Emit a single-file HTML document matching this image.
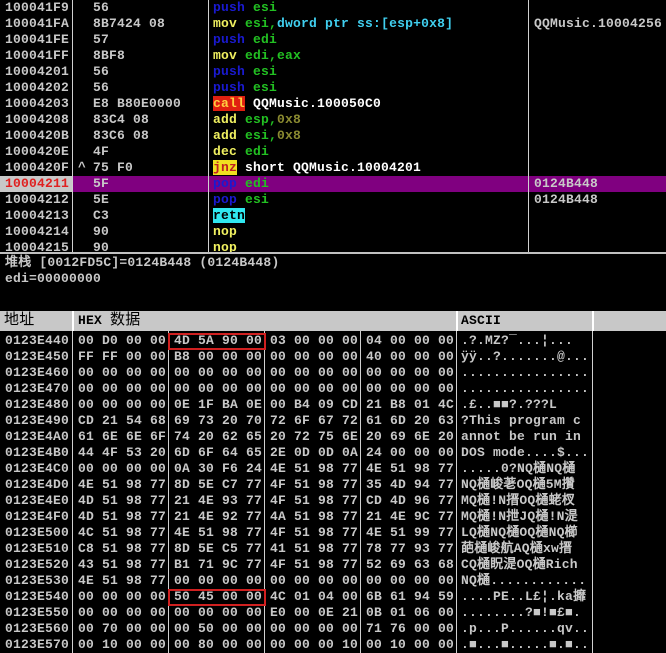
<!DOCTYPE html>
<html><head><meta charset="utf-8"><style>
*{margin:0;padding:0;box-sizing:border-box}
body{width:666px;height:653px;background:#000;overflow:hidden;position:relative;font:bold 13px "Liberation Mono","WenQuanYi Zen Hei",monospace;letter-spacing:.2px;color:#c8c8c8}
.r{position:absolute;left:0;width:666px;height:16px;line-height:16px;white-space:pre}
.r span{position:absolute;top:0}
.a{left:5px}
.b{left:93px}
.c{left:78px}
.d{left:213px}
.m{left:534px}
.vl{position:absolute;width:1px;background:#d0d0d0}
.P{color:#1a1ad0}.G{color:#22c022}.Y{color:#f0f060}.C{color:#40d0f0}.O{color:#8a8a30}.W{color:#fff}
.hx{left:78px}
.as{left:461px}
</style></head><body>
<!-- disasm -->
<div class="r" style="top:-16px"><span class="d" style="background:#f0f000;color:#f0f000">jnz </span></div>
<div class="r" style="top:0"><span class="a">100041F9</span><span class="b">56</span><span class="d"><i class="P" style="font-style:normal">push</i> <i class="G" style="font-style:normal">esi</i></span></div>
<div class="r" style="top:16px"><span class="a">100041FA</span><span class="b">8B7424 08</span><span class="d"><b class="Y">mov</b> <b class="G">esi,</b><b class="C">dword ptr ss:[esp+0x8]</b></span><span class="m">QQMusic.10004256</span></div>
<div class="r" style="top:32px"><span class="a">100041FE</span><span class="b">57</span><span class="d"><b class="P">push</b> <b class="G">edi</b></span></div>
<div class="r" style="top:48px"><span class="a">100041FF</span><span class="b">8BF8</span><span class="d"><b class="Y">mov</b> <b class="G">edi,eax</b></span></div>
<div class="r" style="top:64px"><span class="a">10004201</span><span class="b">56</span><span class="d"><b class="P">push</b> <b class="G">esi</b></span></div>
<div class="r" style="top:80px"><span class="a">10004202</span><span class="b">56</span><span class="d"><b class="P">push</b> <b class="G">esi</b></span></div>
<div class="r" style="top:96px"><span class="a">10004203</span><span class="b">E8 B80E0000</span><span class="d"><b style="background:#e02010;color:#ffd040">call</b> <b class="W">QQMusic.100050C0</b></span></div>
<div class="r" style="top:112px"><span class="a">10004208</span><span class="b">83C4 08</span><span class="d"><b class="Y">add</b> <b class="G">esp,</b><b class="O">0x8</b></span></div>
<div class="r" style="top:128px"><span class="a">1000420B</span><span class="b">83C6 08</span><span class="d"><b class="Y">add</b> <b class="G">esi,</b><b class="O">0x8</b></span></div>
<div class="r" style="top:144px"><span class="a">1000420E</span><span class="b">4F</span><span class="d"><b class="Y">dec</b> <b class="G">edi</b></span></div>
<div class="r" style="top:160px"><span class="a">1000420F</span><span class="c">^</span><span class="b">75 F0</span><span class="d"><b style="background:#f0e020;color:#c02020">jnz</b> <b class="W">short QQMusic.10004201</b></span></div>
<div class="r" style="top:176px;background:#800080"><span style="left:0;width:72px;height:16px;background:#c8c8c8"></span><span class="a" style="color:#e02020">10004211</span><span class="b">5F</span><span class="d"><b class="P">pop</b> <b class="G">edi</b></span><span class="m">0124B448</span></div>
<div class="r" style="top:192px"><span class="a">10004212</span><span class="b">5E</span><span class="d"><b class="P">pop</b> <b class="G">esi</b></span><span class="m">0124B448</span></div>
<div class="r" style="top:208px"><span class="a">10004213</span><span class="b">C3</span><span class="d"><b style="background:#30e8f0;color:#000">retn</b></span></div>
<div class="r" style="top:224px"><span class="a">10004214</span><span class="b">90</span><span class="d"><b class="Y">nop</b></span></div>
<div class="r" style="top:240px;height:12px;overflow:hidden"><span class="a">10004215</span><span class="b">90</span><span class="d"><b class="Y">nop</b></span></div>
<div class="vl" style="left:72px;top:0;height:252px"></div>
<div class="vl" style="left:208px;top:0;height:252px"></div>
<div class="vl" style="left:528px;top:0;height:252px"></div>
<div style="position:absolute;left:0;top:252px;width:666px;height:2px;background:#c0c0c0"></div>
<!-- info -->
<div class="r" style="top:255px"><span style="left:5px">堆栈 [0012FD5C]=0124B448 (0124B448)</span></div>
<div class="r" style="top:271px"><span style="left:5px">edi=00000000</span></div>
<!-- header -->
<div style="position:absolute;left:0;top:311px;width:666px;height:20px;background:#c8c8c8;color:#000;font-size:13px;line-height:20px">
<span style="position:absolute;left:4px;font-weight:normal;font-size:15px">地址</span>
<span style="position:absolute;left:78px">HEX <span style="font-weight:normal;font-size:15px">数据</span></span>
<span style="position:absolute;left:461px">ASCII</span>
<div style="position:absolute;left:72px;top:0;width:2px;height:20px;background:#fff"></div>
<div style="position:absolute;left:456px;top:0;width:2px;height:20px;background:#fff"></div>
<div style="position:absolute;left:592px;top:0;width:2px;height:20px;background:#fff"></div>
</div>
<div id="hex"></div>
<div class="vl" style="left:72px;top:331px;height:322px"></div>
<div class="vl" style="left:168px;top:331px;height:322px"></div>
<div class="vl" style="left:264px;top:331px;height:322px"></div>
<div class="vl" style="left:360px;top:331px;height:322px"></div>
<div class="vl" style="left:456px;top:331px;height:322px"></div>
<div class="vl" style="left:592px;top:331px;height:322px"></div>
<div style="position:absolute;left:168px;top:333px;width:98px;height:17px;border:2px solid #d02020"></div>
<div style="position:absolute;left:168px;top:589px;width:98px;height:17px;border:2px solid #d02020"></div>
<div class="r" style="top:333px"><span class="a">0123E440</span><span class="hx">00 D0 00 00 4D 5A 90 00 03 00 00 00 04 00 00 00</span><span class="as">.?.MZ?‾...¦...</span></div>
<div class="r" style="top:349px"><span class="a">0123E450</span><span class="hx">FF FF 00 00 B8 00 00 00 00 00 00 00 40 00 00 00</span><span class="as">ÿÿ..?.......@...</span></div>
<div class="r" style="top:365px"><span class="a">0123E460</span><span class="hx">00 00 00 00 00 00 00 00 00 00 00 00 00 00 00 00</span><span class="as">................</span></div>
<div class="r" style="top:381px"><span class="a">0123E470</span><span class="hx">00 00 00 00 00 00 00 00 00 00 00 00 00 00 00 00</span><span class="as">................</span></div>
<div class="r" style="top:397px"><span class="a">0123E480</span><span class="hx">00 00 00 00 0E 1F BA 0E 00 B4 09 CD 21 B8 01 4C</span><span class="as">.£..■■?.???L</span></div>
<div class="r" style="top:413px"><span class="a">0123E490</span><span class="hx">CD 21 54 68 69 73 20 70 72 6F 67 72 61 6D 20 63</span><span class="as">?This program c</span></div>
<div class="r" style="top:429px"><span class="a">0123E4A0</span><span class="hx">61 6E 6E 6F 74 20 62 65 20 72 75 6E 20 69 6E 20</span><span class="as">annot be run in</span></div>
<div class="r" style="top:445px"><span class="a">0123E4B0</span><span class="hx">44 4F 53 20 6D 6F 64 65 2E 0D 0D 0A 24 00 00 00</span><span class="as">DOS mode....$...</span></div>
<div class="r" style="top:461px"><span class="a">0123E4C0</span><span class="hx">00 00 00 00 0A 30 F6 24 4E 51 98 77 4E 51 98 77</span><span class="as">.....0?NQ樋NQ樋</span></div>
<div class="r" style="top:477px"><span class="a">0123E4D0</span><span class="hx">4E 51 98 77 8D 5E C7 77 4F 51 98 77 35 4D 94 77</span><span class="as">NQ樋峻荖OQ樋5M攢</span></div>
<div class="r" style="top:493px"><span class="a">0123E4E0</span><span class="hx">4D 51 98 77 21 4E 93 77 4F 51 98 77 CD 4D 96 77</span><span class="as">MQ樋!N搢OQ樋蛯杈</span></div>
<div class="r" style="top:509px"><span class="a">0123E4F0</span><span class="hx">4D 51 98 77 21 4E 92 77 4A 51 98 77 21 4E 9C 77</span><span class="as">MQ樋!N抴JQ樋!N湜</span></div>
<div class="r" style="top:525px"><span class="a">0123E500</span><span class="hx">4C 51 98 77 4E 51 98 77 4F 51 98 77 4E 51 99 77</span><span class="as">LQ樋NQ樋OQ樋NQ櫛</span></div>
<div class="r" style="top:541px"><span class="a">0123E510</span><span class="hx">C8 51 98 77 8D 5E C5 77 41 51 98 77 78 77 93 77</span><span class="as">葩樋峻航AQ樋xw搢</span></div>
<div class="r" style="top:557px"><span class="a">0123E520</span><span class="hx">43 51 98 77 B1 71 9C 77 4F 51 98 77 52 69 63 68</span><span class="as">CQ樋眖湜OQ樋Rich</span></div>
<div class="r" style="top:573px"><span class="a">0123E530</span><span class="hx">4E 51 98 77 00 00 00 00 00 00 00 00 00 00 00 00</span><span class="as">NQ樋............</span></div>
<div class="r" style="top:589px"><span class="a">0123E540</span><span class="hx">00 00 00 00 50 45 00 00 4C 01 04 00 6B 61 94 59</span><span class="as">....PE..L£¦.ka攠</span></div>
<div class="r" style="top:605px"><span class="a">0123E550</span><span class="hx">00 00 00 00 00 00 00 00 E0 00 0E 21 0B 01 06 00</span><span class="as">........?■!■£■.</span></div>
<div class="r" style="top:621px"><span class="a">0123E560</span><span class="hx">00 70 00 00 00 50 00 00 00 00 00 00 71 76 00 00</span><span class="as">.p...P......qv..</span></div>
<div class="r" style="top:637px"><span class="a">0123E570</span><span class="hx">00 10 00 00 00 80 00 00 00 00 00 10 00 10 00 00</span><span class="as">.■...■.....■.■..</span></div>
</body></html>
